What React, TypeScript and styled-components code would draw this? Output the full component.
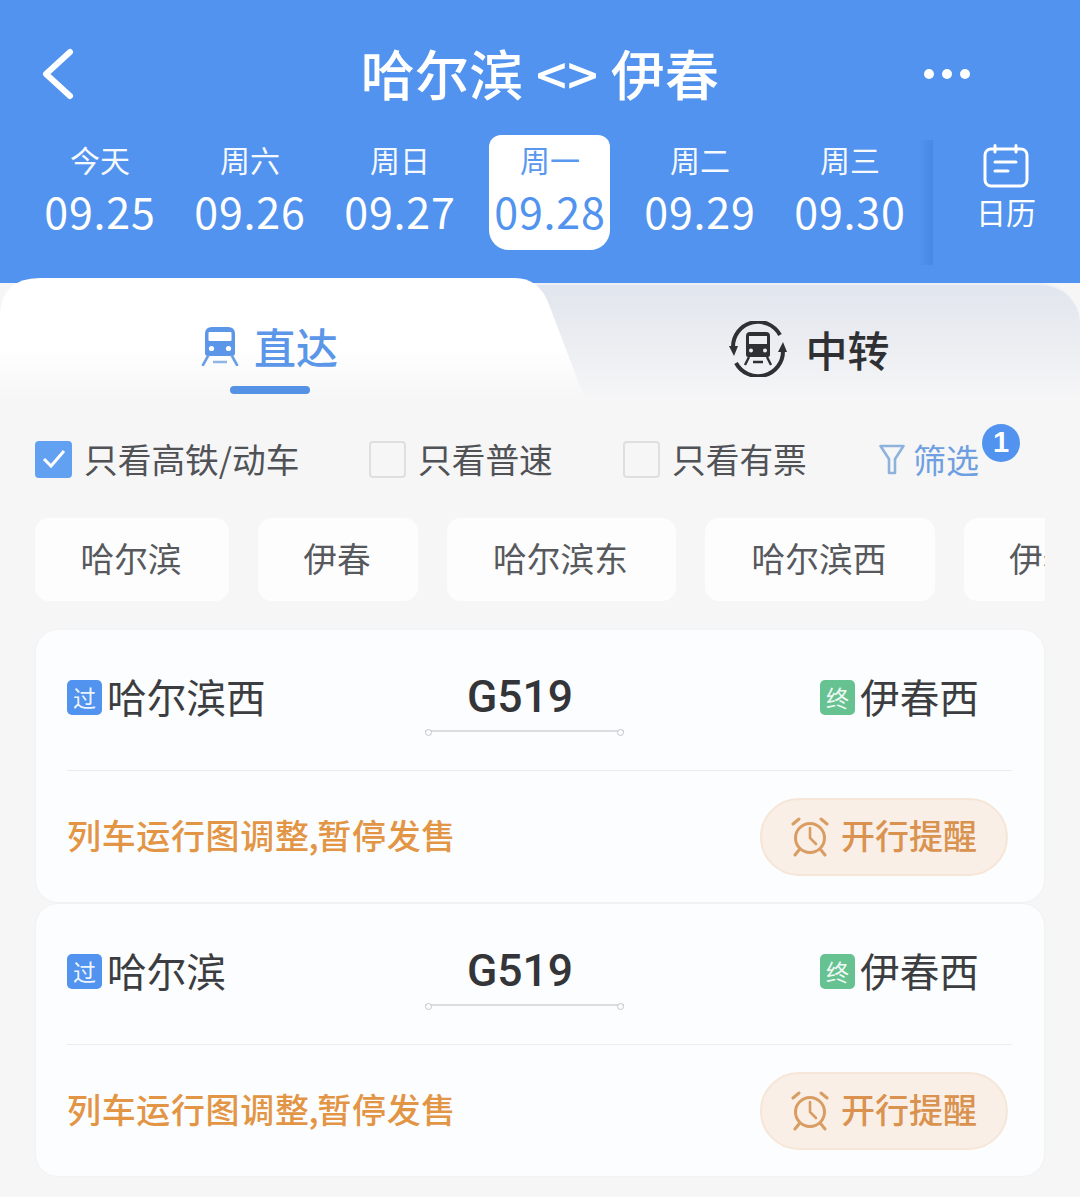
import React from "react";
import styled, { createGlobalStyle } from "styled-components";

const Global = createGlobalStyle`
  html, body { margin: 0; padding: 0; background: #f6f6f7; }
  body { font-family: "Noto Sans CJK SC", "Liberation Sans", sans-serif; }
  * { box-sizing: border-box; }
`;

const Page = styled.div`
  width: 1080px;
  height: 1197px;
  overflow: hidden;
  background: #f6f6f7;
`;
const Header = styled.header`
  height: 283px;
  background: #5193ee;
  color: #fff;
`;
const TopBar = styled.div`
  height: 135px;
  padding: 16px 40px 0 40px;
  display: grid;
  grid-template-columns: 120px 1fr 120px;
  align-items: center;
`;
const BackButton = styled.div`
  display: flex;
  align-items: center;
  margin-top: -4px;
`;
const Title = styled.h1`
  margin: -6px 0 0;
  text-align: center;
  font-size: 54px;
  line-height: 60px;
  font-weight: 500;
  letter-spacing: 0.3px;
  white-space: nowrap;
`;
const More = styled.div`
  display: flex;
  justify-content: flex-end;
  gap: 8px;
  margin-top: -4px;
  padding-right: 70px;
`;
const Dot = styled.span`
  width: 10px;
  height: 10px;
  border-radius: 50%;
  background: #fff;
`;
const DateRow = styled.div`
  display: flex;
  padding-left: 25px;
  height: 130px;
`;
const DateItem = styled.div<{ $active?: boolean }>`
  width: 150px;
  height: 115px;
  display: flex;
  flex-direction: column;
  align-items: center;
  position: relative;
  color: ${(p) => (p.$active ? "#5193ee" : "#fff")};
  &::before {
    content: "";
    display: ${(p) => (p.$active ? "block" : "none")};
    position: absolute;
    left: 14px;
    width: 121px;
    top: 0;
    bottom: 0;
    background: #fff;
    border-radius: 12px 12px 20px 20px;
  }
`;
const DayLabel = styled.span`
  position: relative;
  font-size: 30px;
  line-height: 36px;
  margin-top: 6px;
  color: inherit;
  opacity: 0.95;
`;
const DateLabel = styled.span`
  position: relative;
  font-family: "Noto Sans CJK SC", "Open Sans", sans-serif;
  font-size: 43px;
  line-height: 46px;
  margin-top: 10px;
  letter-spacing: 0.8px;
`;
const Shade = styled.div`
  width: 14px;
  height: 125px;
  margin: 5px 0 0 -6px;
  background: linear-gradient(to right, rgba(70, 130, 220, 0), rgba(66, 127, 220, 0.55));
`;
const CalendarCell = styled.div`
  width: 146px;
  display: flex;
  flex-direction: column;
  align-items: center;
  padding-top: 9px;
`;
const CalendarText = styled.span`
  font-size: 30px;
  line-height: 36px;
  margin-top: 5px;
`;
const Tabs = styled.div`
  height: 117px;
  border-radius: 40px 40px 0 0;
  background: linear-gradient(to bottom, #e1e5ed 0%, #eceef2 55%, #f6f6f7 100%);
  border-top: 2px solid #eef0f3;
  display: grid;
  grid-template-columns: 586px 1fr;
`;
const DirectTab = styled.div`
  height: 124px;
  margin-top: -7px;
  background: linear-gradient(to bottom, #ffffff 0%, #ffffff 55%, #f6f6f7 100%);
  clip-path: path("M0 122 L0 40 Q0 0 40 0 L515 0 Q538 0 548 24 L586 124 L0 124 Z");
  display: flex;
  flex-direction: column;
  align-items: center;
  padding-top: 38px;
  padding-right: 47px;
`;
const TabLabel = styled.div<{ $active?: boolean }>`
  display: flex;
  align-items: center;
  gap: ${(p) => (p.$active ? "15px" : "18px")};
  font-size: 42px;
  line-height: 60px;
  font-weight: 500;
  color: ${(p) => (p.$active ? "#5b96e8" : "#2f3033")};
`;
const Underline = styled.div`
  width: 80px;
  height: 8px;
  border-radius: 4px;
  background: #5591e4;
  margin-top: 10px;
`;
const TransferTab = styled.div`
  display: flex;
  justify-content: center;
  padding-top: 11px;
  padding-right: 47px;
`;
const Filters = styled.div`
  height: 118px;
  padding: 40px 0 0 35px;
  display: flex;
  align-items: flex-start;
  position: relative;
`;
const Check = styled.label<{ $w: number }>`
  width: ${(p) => p.$w}px;
  display: flex;
  align-items: center;
  gap: 12px;
  font-size: 33.7px;
  line-height: 38px;
  color: #505256;
`;
const Box = styled.span<{ $on?: boolean }>`
  width: 37px;
  height: 37px;
  border-radius: 4px;
  flex: none;
  display: flex;
  align-items: center;
  justify-content: center;
  background: ${(p) => (p.$on ? "#62a0f2" : "#f6f6f7")};
  border: 2px solid ${(p) => (p.$on ? "#62a0f2" : "#dfdfe1")};
`;
const FilterLink = styled.div`
  display: flex;
  align-items: center;
  gap: 8px;
  font-size: 33px;
  line-height: 38px;
  color: #6f9fe0;
  position: relative;
  margin-left: -1px;
`;
const Badge = styled.span`
  position: absolute;
  left: 103px;
  top: -16px;
  width: 38px;
  height: 38px;
  border-radius: 19px;
  background: #5193ee;
  color: #fff;
  font-family: "Liberation Sans", sans-serif;
  font-size: 29px;
  font-weight: 700;
  line-height: 36px;
  text-align: center;
`;
const Chips = styled.div`
  margin: 0 35px;
  display: flex;
  gap: 29px;
  overflow: hidden;
  height: 83px;
`;
const Chip = styled.div<{ $w: number }>`
  flex: none;
  width: ${(p) => p.$w}px;
  height: 83px;
  padding-bottom: 4px;
  padding-right: 2px;
  background: #fdfdfe;
  border-radius: 14px;
  display: flex;
  align-items: center;
  justify-content: center;
  font-size: 33.7px;
  color: #57595d;
`;
const ChipCut = styled(Chip)`
  justify-content: flex-start;
  padding-left: 45px;
  overflow: hidden;
  white-space: nowrap;
`;
const Card = styled.section`
  margin: 0 36px 2px;
  height: 272px;
  background: #fcfdfe;
  border-radius: 22px;
  padding: 0 32px 0 31px;
  box-shadow: 0 0 2px rgba(225, 228, 235, 0.6);
`;
const List = styled.div`
  margin-top: 29px;
`;
const TrainRow = styled.div`
  height: 141px;
  display: grid;
  grid-template-columns: 358px 199px 1fr;
  border-bottom: 1.5px solid #ececee;
  align-items: start;
`;
const Station = styled.div<{ $right?: boolean }>`
  margin-top: 44px;
  display: flex;
  align-items: center;
  gap: 5px;
  font-size: 39.7px;
  line-height: 48px;
  color: #3c3d40;
  padding-left: ${(p) => (p.$right ? "196px" : "0")};
  white-space: nowrap;
`;
const StationName = styled.span`
  margin-top: -2px;
`;
const Tag = styled.span<{ $green?: boolean }>`
  width: 35px;
  height: 35px;
  flex: none;
  border-radius: 5px;
  background: ${(p) => (p.$green ? "#66c291" : "#5193ee")};
  color: rgba(255, 255, 255, 0.92);
  font-size: 23px;
  line-height: 34px;
  text-align: center;
`;
const TrainInfo = styled.div`
  margin-top: 40px;
  display: flex;
  flex-direction: column;
  align-items: center;
`;
const TrainNo = styled.div`
  font-family: Roboto, "Liberation Sans", sans-serif;
  font-size: 44.5px;
  line-height: 54px;
  font-weight: 500;
  color: #333539;
  margin-right: 9px;
`;
const Route = styled.div`
  margin-top: 6px;
  width: 199px;
  height: 2px;
  background: #dcdcdf;
  position: relative;
  &::before,
  &::after {
    content: "";
    position: absolute;
    top: -1.5px;
    width: 5px;
    height: 5px;
    border-radius: 50%;
    background: #fcfdfe;
    border: 1px solid #c6c6ca;
  }
  &::before { left: 0; }
  &::after { right: 0; }
`;
const Notice = styled.div`
  height: 131px;
  display: flex;
  align-items: center;
  justify-content: space-between;
  padding-left: 0;
  padding-right: 4px;
`;
const NoticeText = styled.span`
  font-size: 34px;
  line-height: 44px;
  font-weight: 500;
  letter-spacing: 0.65px;
  color: #e39546;
  margin-top: -4px;
  white-space: nowrap;
`;
const Narrow = styled.span`
  margin: 0 -2px 0 -1px;
`;
const Remind = styled.div`
  width: 248px;
  height: 78px;
  border-radius: 39px;
  background: #f9efe6;
  border: 2px solid #f6e6d8;
  display: flex;
  align-items: center;
  justify-content: center;
  gap: 12px;
  font-size: 34px;
  color: #d9924f;
  font-weight: 500;
`;
const RemindText = styled.span`
  margin-top: -4px;
`;

const TrainIcon = () => (
  <svg width="38" height="40" viewBox="0 0 38 40" fill="none">
    <path d="M4 8 Q4 1 11 1 H27 Q34 1 34 8 V27 Q34 30 31 30 H7 Q4 30 4 27 Z" fill="#5b96e8" />
    <rect x="7.5" y="6" width="23" height="9" rx="1" fill="#fff" />
    <circle cx="10.5" cy="22.5" r="2.6" fill="#fff" />
    <circle cx="27.5" cy="22.5" r="2.6" fill="#fff" />
    <path d="M7 30 L2 39 M31 30 L36 39" stroke="#6b9ee2" strokeWidth="2.6" strokeLinecap="round" />
    <path d="M12 36 H26" stroke="#8fb4e6" strokeWidth="2.4" />
  </svg>
);

const TransferIcon = () => (
  <svg width="58" height="56" viewBox="0 0 58 56" fill="none">
    <path d="M4 26 A25 25 0 0 1 51 14" stroke="#2f3033" strokeWidth="4" />
    <path d="M54 30 A25 25 0 0 1 7 42" stroke="#2f3033" strokeWidth="4" />
    <path d="M0 25 L9 25 L5 35 Z" fill="#2f3033" />
    <path d="M49 31 L58 31 L54 21 Z" fill="#2f3033" />
    <path d="M17 15 Q17 11 21 11 H37 Q41 11 41 15 V34 Q41 36 39 36 H19 Q17 36 17 34 Z" fill="#2f3033" />
    <rect x="20" y="15" width="18" height="8" fill="#eceef2" />
    <circle cx="22" cy="29.5" r="2" fill="#eceef2" />
    <circle cx="36" cy="29.5" r="2" fill="#eceef2" />
    <path d="M20 36 L16 44 M38 36 L42 44 M24 41 H34" stroke="#2f3033" strokeWidth="2.4" />
  </svg>
);

const AlarmIcon = () => (
  <svg width="38" height="40" viewBox="0 0 38 40" fill="none" stroke="#d99c63" strokeWidth="3" strokeLinecap="round">
    <circle cx="19" cy="21" r="14.5" />
    <path d="M19 11 V21 L25 27" strokeWidth="2.6" />
    <path d="M2 7 L8 2 M36 7 L30 2" />
    <path d="M8 33 L4 38 M30 33 L34 38" />
  </svg>
);

const stations: [string, number][] = [
  ["哈尔滨", 194],
  ["伊春", 160],
  ["哈尔滨东", 229],
  ["哈尔滨西", 230],
];
const days: [string, string][] = [
  ["今天", "09.25"],
  ["周六", "09.26"],
  ["周日", "09.27"],
  ["周一", "09.28"],
  ["周二", "09.29"],
  ["周三", "09.30"],
];
const trains = ["哈尔滨西", "哈尔滨"];

export default function App() {
  return (
    <Page>
      <Global />
      <Header>
        <TopBar>
          <BackButton>
            <svg width="36" height="52" viewBox="0 0 36 52" fill="none">
              <path d="M30 4 L6 26 L30 48" stroke="#fff" strokeWidth="6" strokeLinecap="round" strokeLinejoin="round" />
            </svg>
          </BackButton>
          <Title>哈尔滨 &lt;&gt; 伊春</Title>
          <More>
            <Dot />
            <Dot />
            <Dot />
          </More>
        </TopBar>
        <DateRow>
          {days.map(([d, n], i) => (
            <DateItem key={n} $active={i === 3}>
              <DayLabel>{d}</DayLabel>
              <DateLabel>{n}</DateLabel>
            </DateItem>
          ))}
          <Shade />
          <CalendarCell>
            <svg width="46" height="44" viewBox="0 0 46 44" fill="none" stroke="#fff" strokeWidth="3" strokeLinecap="round">
              <rect x="2" y="5" width="42" height="37" rx="6" />
              <path d="M12 1.5 V8 M33 1.5 V8" />
              <path d="M12 18 H33 M12 27 H25" />
            </svg>
            <CalendarText>日历</CalendarText>
          </CalendarCell>
        </DateRow>
      </Header>
      <Tabs>
        <DirectTab>
          <TabLabel $active>
            <TrainIcon />
            直达
          </TabLabel>
          <Underline />
        </DirectTab>
        <TransferTab>
          <TabLabel>
            <TransferIcon />
            中转
          </TabLabel>
        </TransferTab>
      </Tabs>
      <Filters>
        <Check $w={334}>
          <Box $on>
            <svg width="26" height="22" viewBox="0 0 26 22" fill="none">
              <path d="M3 11 L10 18 L23 3" stroke="#fff" strokeWidth="3" />
            </svg>
          </Box>
          只看高铁/动车
        </Check>
        <Check $w={254}>
          <Box />
          只看普速
        </Check>
        <Check $w={257}>
          <Box />
          只看有票
        </Check>
        <FilterLink>
          <svg width="26" height="32" viewBox="0 0 26 32" fill="none" stroke="#8fb2dd" strokeWidth="2.6" strokeLinejoin="round">
            <path d="M1.5 3 H24.5 L16 16 V30 H10 V16 Z" />
          </svg>
          筛选
          <Badge>1</Badge>
        </FilterLink>
      </Filters>
      <Chips>
        {stations.map(([s, w]) => (
          <Chip key={s} $w={w}>
            {s}
          </Chip>
        ))}
        <ChipCut $w={120}>伊春西</ChipCut>
      </Chips>
      <List>
        {trains.map((t, i) => (
          <Card key={i}>
            <TrainRow>
              <Station>
                <Tag>过</Tag>
                <StationName>{t}</StationName>
              </Station>
              <TrainInfo>
                <TrainNo>G519</TrainNo>
                <Route />
              </TrainInfo>
              <Station $right>
                <Tag $green>终</Tag>
                <StationName>伊春西</StationName>
              </Station>
            </TrainRow>
            <Notice>
              <NoticeText>
                列车运行图调整<Narrow>,</Narrow>暂停发售
              </NoticeText>
              <Remind>
                <AlarmIcon />
                <RemindText>开行提醒</RemindText>
              </Remind>
            </Notice>
          </Card>
        ))}
      </List>
    </Page>
  );
}
